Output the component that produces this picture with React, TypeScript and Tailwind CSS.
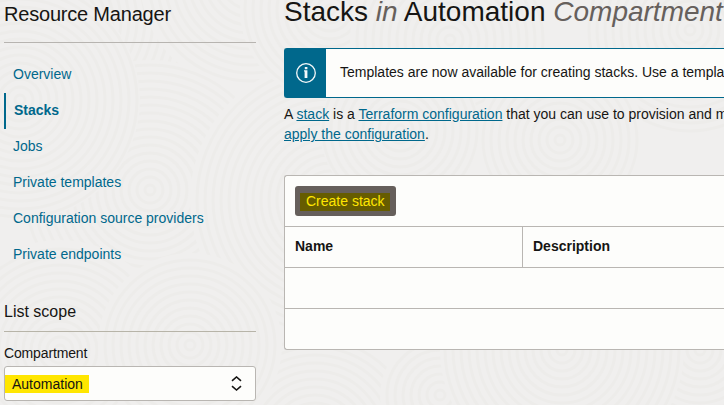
import React from "react";

type Swirl = { cx: number; cy: number; r: number };

const swirls: Swirl[] = [
  { cx: 60, cy: 20, r: 150 },
  { cx: 250, cy: -20, r: 110 },
  { cx: 150, cy: 190, r: 130 },
  { cx: 20, cy: 100, r: 120 },
  { cx: 330, cy: 200, r: 140 },
  { cx: 330, cy: 10, r: 90 },
  { cx: 450, cy: 40, r: 100 },
  { cx: 690, cy: 30, r: 110 },
  { cx: 560, cy: 140, r: 85 },
  { cx: 400, cy: 130, r: 80 },
  { cx: 60, cy: 350, r: 110 },
  { cx: 315, cy: 440, r: 110 },
  { cx: 440, cy: 395, r: 60 },
  { cx: 190, cy: 345, r: 92 },
  { cx: 700, cy: 350, r: 80 },
  { cx: 562, cy: 350, r: 122 },
];

function Backdrop() {
  return (
    <svg className="pointer-events-none absolute inset-0" width="724" height="405" viewBox="0 0 724 405" aria-hidden="true">
      {swirls.map(({ cx, cy, r }) => (
        <g key={`${cx}-${cy}`}>
          <circle cx={cx} cy={cy} r={r} fill="#f0efee" />
          {Array.from({ length: Math.floor(r / 8) }, (_, i) => (
            <circle key={i} cx={cx} cy={cy} r={(i + 1) * 8 - 3} fill="none" stroke="#edecea" strokeWidth="3" />
          ))}
        </g>
      ))}
    </svg>
  );
}

const navItems = [
  "Overview",
  "Stacks",
  "Jobs",
  "Private templates",
  "Configuration source providers",
  "Private endpoints",
];

function Sidebar() {
  return (
    <aside className="w-[252px] shrink-0">
      <h2 className="h-[43px] border-b border-[#b7b4b0] pt-[2px] text-[20px] leading-6 tracking-[-0.2px]">Resource Manager</h2>
      <nav className="mt-[14px]">
        {navItems.map((item) =>
          item === "Stacks" ? (
            <a key={item} className="block h-9 border-l-2 border-[#00688c] pl-2 font-bold leading-[34px] text-[#00688c]">
              {item}
            </a>
          ) : (
            <a key={item} className="block h-9 pl-[9px] leading-[34px] text-[#00688c]">
              {item}
            </a>
          ),
        )}
      </nav>
      <h3 className="mt-7 h-[31px] border-b border-[#b7b4a8] text-[16px] leading-[22px]">List scope</h3>
      <label className="mt-[11px] block leading-5 tracking-[-0.15px]">Compartment</label>
      <div className="mt-[3px] flex h-[35px] items-center justify-between rounded-[3px] border border-[#b9b6b2] bg-[#fdfdfb] pr-[13px]">
        <span className="h-[18px] w-[84px] bg-[#ffe600] pl-[7px] leading-[18px]">Automation</span>
        <svg width="11" height="16" viewBox="0 0 11 16" fill="none" stroke="#161513" strokeWidth="1.6">
          <path d="M1 4.8 5.5 1 10 4.8M1 10.2l4.5 3.8L10 10.2" />
        </svg>
      </div>
    </aside>
  );
}

function Notice() {
  return (
    <div className="mt-[23px] flex h-[50px] rounded-l-[3px] border border-r-0 border-[#00688c] bg-[#fdfdfb]">
      <div className="flex w-[41px] shrink-0 items-center justify-center bg-[#00688c]">
        <svg width="20" height="20" viewBox="0 0 20 20" fill="none" className="ml-px">
          <circle cx="10" cy="10" r="9.3" stroke="#f4f8f9" strokeWidth="1.3" />
          <path d="M8.8 4h2.6v2.2H8.8zM8 7.2h3.4V15H8.6V8.6H8z" fill="#f4f8f9" />
        </svg>
      </div>
      <p className="pl-[14px] leading-[47px]">Templates are now available for creating stacks. Use a template</p>
    </div>
  );
}

function StackTable() {
  return (
    <section className="mt-[31px] h-[175px] rounded-l-[3px] border border-r-0 border-[#b9b6b2] bg-[#fdfdfb]">
      <div className="h-[51px] border-b border-[#b9b6b2] pt-[10px] pl-[10px]">
        <button className="flex h-[30px] w-[101px] items-center rounded-[3px] bg-[#665f5b] pl-[5px]">
          <span className="mt-[2px] h-[18px] w-[90px] bg-[#665c00] pl-[6px] text-left leading-[17px] text-[#ffe600]">Create stack</span>
        </button>
      </div>
      <div className="flex h-[41px] border-b border-[#b9b6b2] font-bold leading-[38px]">
        <div className="w-[238px] border-r border-[#b9b6b2] pl-[10px]">Name</div>
        <div className="pl-[10px]">Description</div>
      </div>
      <div className="h-[41px] border-b border-[#b9b6b2]" />
    </section>
  );
}

export default function App() {
  return (
    <div className="relative h-[405px] w-[724px] overflow-hidden bg-[#f0efee] font-['Liberation_Sans',Arial,sans-serif] text-[14px] text-[#161513]">
      <Backdrop />
      <div className="relative flex w-[724px] gap-7 pl-1">
        <Sidebar />
        <main className="w-[440px] shrink-0 whitespace-nowrap">
          <h1 className="h-[25px] text-[28px] leading-[24px]">
            Stacks <i className="text-[#66605c]">in</i> Automation <i className="text-[#66605c]">Compartment</i>
          </h1>
          <Notice />
          <p className="mt-[6px] leading-5">
            A <a className="text-[#00688c] underline">stack</a> is a{" "}
            <a className="text-[#00688c] underline">Terraform configuration</a> that you can use to provision and m
            <br />
            <a className="text-[#00688c] underline">apply the configuration</a>.
          </p>
          <StackTable />
        </main>
      </div>
    </div>
  );
}
